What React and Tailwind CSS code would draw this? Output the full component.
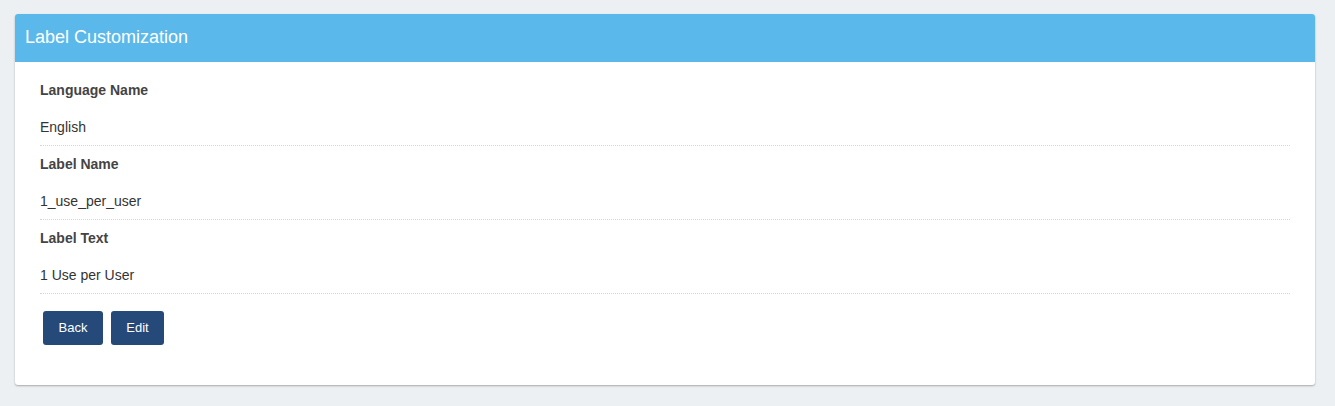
import React from 'react';

const rows = [
  { label: 'Language Name', value: 'English' },
  { label: 'Label Name', value: '1_use_per_user' },
  { label: 'Label Text', value: '1 Use per User' },
];

export default function App(){
  return (
    <div className="min-h-screen bg-[#ecf0f3] pt-[14px] pl-[15px] pr-[20px] pb-[20px]" style={{ fontFamily: '"Liberation Sans", Arial, sans-serif' }}>
      <div className="bg-white rounded-[3px] shadow-[0_1px_2px_rgba(0,0,0,0.3)] overflow-hidden">
        <div className="h-[48px] bg-[#5ab9ea] px-[10px] pb-[2px] flex items-center">
          <h3 className="text-[18px] text-white leading-none">Label Customization</h3>
        </div>

        <div className="px-[25px] pt-[10px] pb-[40px]">
          {rows.map((row) => (
            <div key={row.label}>
              <div className="py-[8px] text-[14px] leading-[20px] font-bold text-[#444]">{row.label}</div>
              <div className="pt-[9px] pb-[8px] text-[14px] leading-[20px] text-[#333] border-b border-dotted border-[#d5d5d5]">{row.value}</div>
            </div>
          ))}

          <div className="flex gap-[8px] mt-[17px] ml-[3px]">
            <button className="h-[34px] w-[60px] bg-[#254a7a] text-white text-[13px] rounded-[3px]">Back</button>
            <button className="h-[34px] w-[53px] bg-[#254a7a] text-white text-[13px] rounded-[3px]">Edit</button>
          </div>
        </div>
      </div>
    </div>
  );
}
